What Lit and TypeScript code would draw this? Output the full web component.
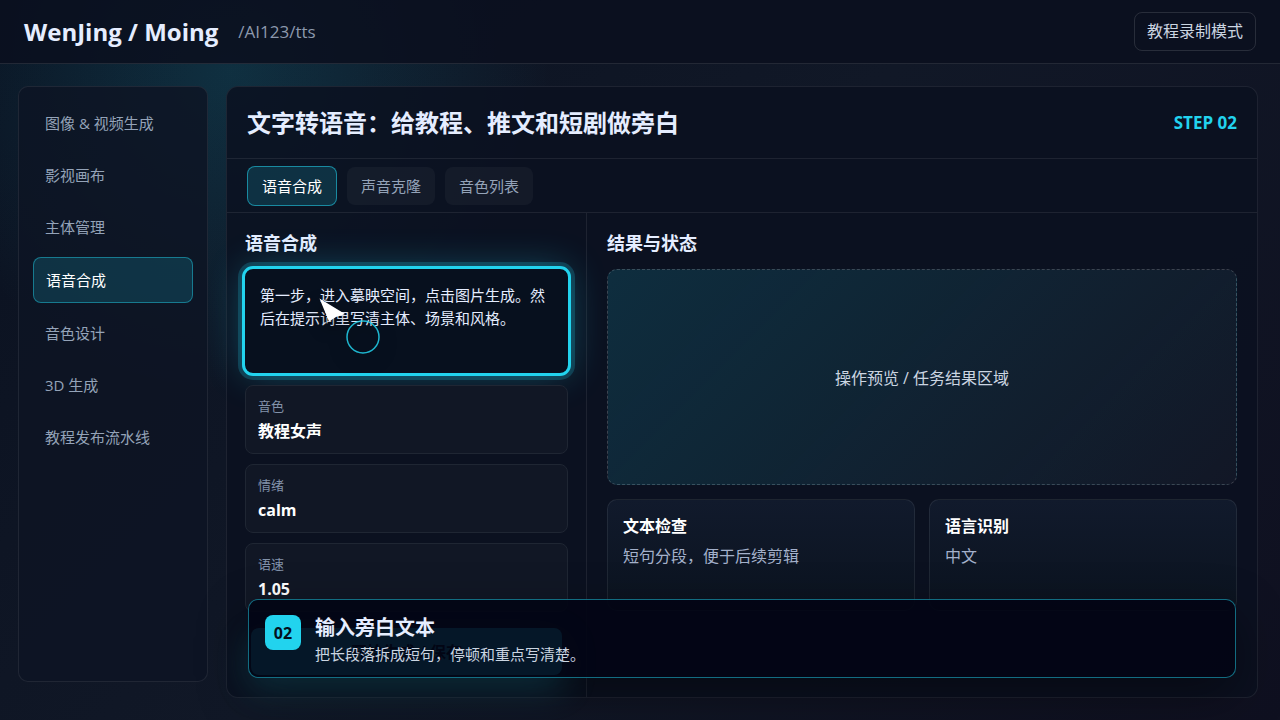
import { LitElement, html, css } from "lit";
import { customElement, state } from "lit/decorators.js";

const NAV = ["图像 & 视频生成", "影视画布", "主体管理", "语音合成", "音色设计", "3D 生成", "教程发布流水线"];
const TABS = ["语音合成", "声音克隆", "音色列表"];
const FIELDS = [
  { label: "音色", value: "教程女声" },
  { label: "情绪", value: "calm" },
  { label: "语速", value: "1.05" },
];
const CARDS = [
  { title: "文本检查", body: "短句分段，便于后续剪辑" },
  { title: "语言识别", body: "中文" },
];

@customElement("app-root")
export class AppRoot extends LitElement {
  static styles = css`
    :host {
      display: flex;
      flex-direction: column;
      min-height: 100vh;
      box-sizing: border-box;
      color: #e5edff;
      font-family: "Open Sans", "Noto Sans CJK SC", sans-serif;
      font-size: 16px;
      line-height: 24px;
      background:
        radial-gradient(circle at 18% 10%, rgba(34, 211, 238, 0.15), transparent 26%),
        linear-gradient(135deg, #0a1120 0%, #111827 48%, #0f1020 100%);
    }
    * {
      box-sizing: border-box;
    }
    h1, h2, h3, p, ul {
      margin: 0;
      padding: 0;
    }
    button, textarea {
      font: inherit;
      color: inherit;
      border: 0;
      margin: 0;
    }
    .topbar {
      display: flex;
      align-items: center;
      height: 64px;
      padding: 0 24px;
      border-bottom: 1px solid rgba(255, 255, 255, 0.1);
      background: rgba(10, 15, 30, 0.86);
    }
    .brand {
      font-size: 24px;
      font-weight: 700;
    }
    .path {
      margin-left: 20px;
      color: #8d99ad;
      font-size: 17px;
    }
    .mode {
      margin-left: auto;
      padding: 7px 12px;
      border: 1px solid rgba(255, 255, 255, 0.12);
      border-radius: 8px;
      color: #cbd5e1;
      background: transparent;
      line-height: 23px;
    }
    .body {
      flex: 1;
      display: grid;
      grid-template-columns: 190px minmax(0, 1fr);
      gap: 18px;
      padding: 22px 22px 22px 18px;
    }
    .sidebar {
      margin-bottom: 16px;
      padding: 14px;
      border: 1px solid rgba(255, 255, 255, 0.08);
      border-radius: 10px;
      background: rgba(13, 20, 36, 0.84);
    }
    .nav {
      display: grid;
      gap: 8px;
      list-style: none;
    }
    .nav-link {
      display: block;
      padding: 10px 12px;
      border-radius: 8px;
      color: #94a3b8;
      font-size: 15px;
      text-decoration: none;
    }
    .nav-link.active {
      border: 1px solid rgba(34, 211, 238, 0.45);
      background: rgba(34, 211, 238, 0.16);
      color: #fff;
    }
    .main {
      position: relative;
      display: flex;
      flex-direction: column;
      border: 1px solid rgba(255, 255, 255, 0.08);
      border-radius: 12px;
      background: rgba(11, 17, 32, 0.85);
    }
    .main-head {
      display: flex;
      align-items: center;
      justify-content: space-between;
      height: 72px;
      padding: 0 20px;
      border-bottom: 1px solid rgba(255, 255, 255, 0.08);
    }
    .title {
      font-size: 24px;
      font-weight: 700;
    }
    .step {
      color: #22d3ee;
      font-size: 17px;
      font-weight: 700;
    }
    .tabs {
      display: flex;
      align-items: center;
      gap: 10px;
      padding: 7px 20px 6px;
      border-bottom: 1px solid rgba(255, 255, 255, 0.08);
    }
    .tab {
      padding: 7px 14px;
      border-radius: 8px;
      background: rgba(255, 255, 255, 0.04);
      color: #94a3b8;
      font-size: 15px;
    }
    .tab.active {
      border: 1px solid rgba(34, 211, 238, 0.55);
      background: rgba(34, 211, 238, 0.16);
      color: #fff;
    }
    .work {
      flex: 1;
      display: grid;
      grid-template-columns: 360px minmax(0, 1fr);
    }
    .form {
      padding: 18px 18px 22px;
      border-right: 1px solid rgba(255, 255, 255, 0.08);
    }
    .result {
      padding: 18px 20px;
    }
    .section {
      margin-bottom: 14px;
      font-size: 18px;
      font-weight: 700;
    }
    .script-wrap {
      position: relative;
      margin-bottom: 12px;
    }
    .script {
      display: block;
      width: 100%;
      height: 104px;
      padding: 15px;
      border-radius: 8px;
      outline: 3px solid #22d3ee;
      box-shadow: 0 0 0 7px rgba(34, 211, 238, 0.2), 0 0 38px rgba(34, 211, 238, 0.32);
      background: #07101e;
      font-size: 15px;
      line-height: 23px;
      resize: none;
      overflow: hidden;
    }
    .pointer {
      position: absolute;
      left: 70px;
      top: 25px;
      pointer-events: none;
      filter: drop-shadow(0 6px 8px rgba(0, 0, 0, 0.5));
    }
    .fields {
      position: relative;
      display: grid;
      gap: 10px;
    }
    .field {
      display: grid;
      gap: 2px;
      padding: 10px 12px 8px;
      border: 1px solid #1f2633;
      border-radius: 8px;
      background: #111725;
    }
    .field-label {
      color: #8292aa;
      font-size: 13px;
      line-height: 20px;
    }
    .field-value {
      color: #fff;
      font-weight: 700;
      line-height: 27px;
    }
    .generate {
      display: block;
      width: calc(100% - 12px);
      height: 47px;
      margin: 16px 6px 0;
      border-radius: 8px;
      background: #22d3ee;
      box-shadow: 0 12px 34px rgba(34, 211, 238, 0.25);
      color: #03111d;
      font-weight: 700;
    }
    .preview {
      display: grid;
      place-items: center;
      height: 216px;
      margin-bottom: 14px;
      padding-top: 2px;
      border: 1px dashed rgba(255, 255, 255, 0.18);
      border-radius: 10px;
      background: linear-gradient(135deg, rgba(34, 211, 238, 0.15), rgba(255, 255, 255, 0.03));
      color: #cbd5e1;
    }
    .cards {
      display: grid;
      grid-template-columns: 1fr 1fr;
      gap: 14px;
    }
    .card {
      min-height: 112px;
      padding: 14px 15px;
      border: 1px solid rgba(255, 255, 255, 0.08);
      border-radius: 10px;
      background: linear-gradient(180deg, #111a2c, #0b131f);
    }
    .card-title {
      color: #fff;
      font-size: 16px;
      font-weight: 700;
    }
    .card-body {
      margin-top: 6px;
      color: #a4b1cb;
    }
    .caption {
      position: absolute;
      left: 21px;
      right: 21px;
      bottom: 19px;
      display: flex;
      gap: 14px;
      padding: 15px 16px 10px;
      border: 1px solid rgba(34, 211, 238, 0.5);
      border-radius: 10px;
      background: rgba(2, 4, 20, 0.91);
      box-shadow: 0 18px 50px rgba(0, 0, 0, 0.4);
    }
    .badge {
      display: grid;
      place-items: center;
      width: 36px;
      height: 35px;
      border-radius: 8px;
      background: #22d3ee;
      color: #03111d;
      font-weight: 700;
    }
    .caption-title {
      font-size: 20px;
      font-weight: 700;
      line-height: 26px;
    }
    .caption-body {
      color: #cbd5e1;
      font-size: 15px;
      line-height: 26px;
    }
  `;

  @state() private page = 3;
  @state() private tab = 0;

  render() {
    return html`
      <header class="topbar">
        <div class="brand">WenJing / Moing</div>
        <span class="path">/AI123/tts</span>
        <button class="mode">教程录制模式</button>
      </header>
      <div class="body">
        <nav class="sidebar">
          <ul class="nav">
            ${NAV.map((name, i) => html`
              <li><a href="#" class="nav-link ${i === this.page ? "active" : ""}"
                @click=${(e: Event) => { e.preventDefault(); this.page = i; }}>${name}</a></li>`)}
          </ul>
        </nav>
        <main class="main">
          <div class="main-head">
            <h1 class="title">文字转语音：给教程、推文和短剧做旁白</h1>
            <span class="step">STEP 02</span>
          </div>
          <div class="tabs">
            ${TABS.map((name, i) => html`
              <button class="tab ${i === this.tab ? "active" : ""}" @click=${() => (this.tab = i)}>${name}</button>`)}
          </div>
          <div class="work">
            <section class="form">
              <h2 class="section" id="script-label">语音合成</h2>
              <div class="script-wrap">
                <textarea class="script" aria-labelledby="script-label" spellcheck="false"
                  .value=${"第一步，进入摹映空间，点击图片生成。然后在提示词里写清主体、场景和风格。"}></textarea>
                <svg class="pointer" width="70" height="65" viewBox="0 0 70 65" aria-hidden="true">
                  <path d="M4.500 4.500 L30 20 L21 23 L14 27.500 Z" fill="#fff" />
                  <circle cx="48" cy="43" r="16" fill="none" stroke="#22d3ee" stroke-opacity=".85" stroke-width="1.500" />
                </svg>
              </div>
              <div class="fields">
                ${FIELDS.map((f) => html`
                  <div class="field">
                    <span class="field-label">${f.label}</span>
                    <strong class="field-value">${f.value}</strong>
                  </div>`)}
              </div>
              <button class="generate">开始生成 / 保存</button>
            </section>
            <section class="result">
              <h2 class="section">结果与状态</h2>
              <div class="preview">操作预览 / 任务结果区域</div>
              <div class="cards">
                ${CARDS.map((c) => html`
                  <article class="card">
                    <h3 class="card-title">${c.title}</h3>
                    <p class="card-body">${c.body}</p>
                  </article>`)}
              </div>
            </section>
          </div>
          <aside class="caption">
            <span class="badge">02</span>
            <div>
              <h2 class="caption-title">输入旁白文本</h2>
              <p class="caption-body">把长段落拆成短句，停顿和重点写清楚。</p>
            </div>
          </aside>
        </main>
      </div>
    `;
  }
}
